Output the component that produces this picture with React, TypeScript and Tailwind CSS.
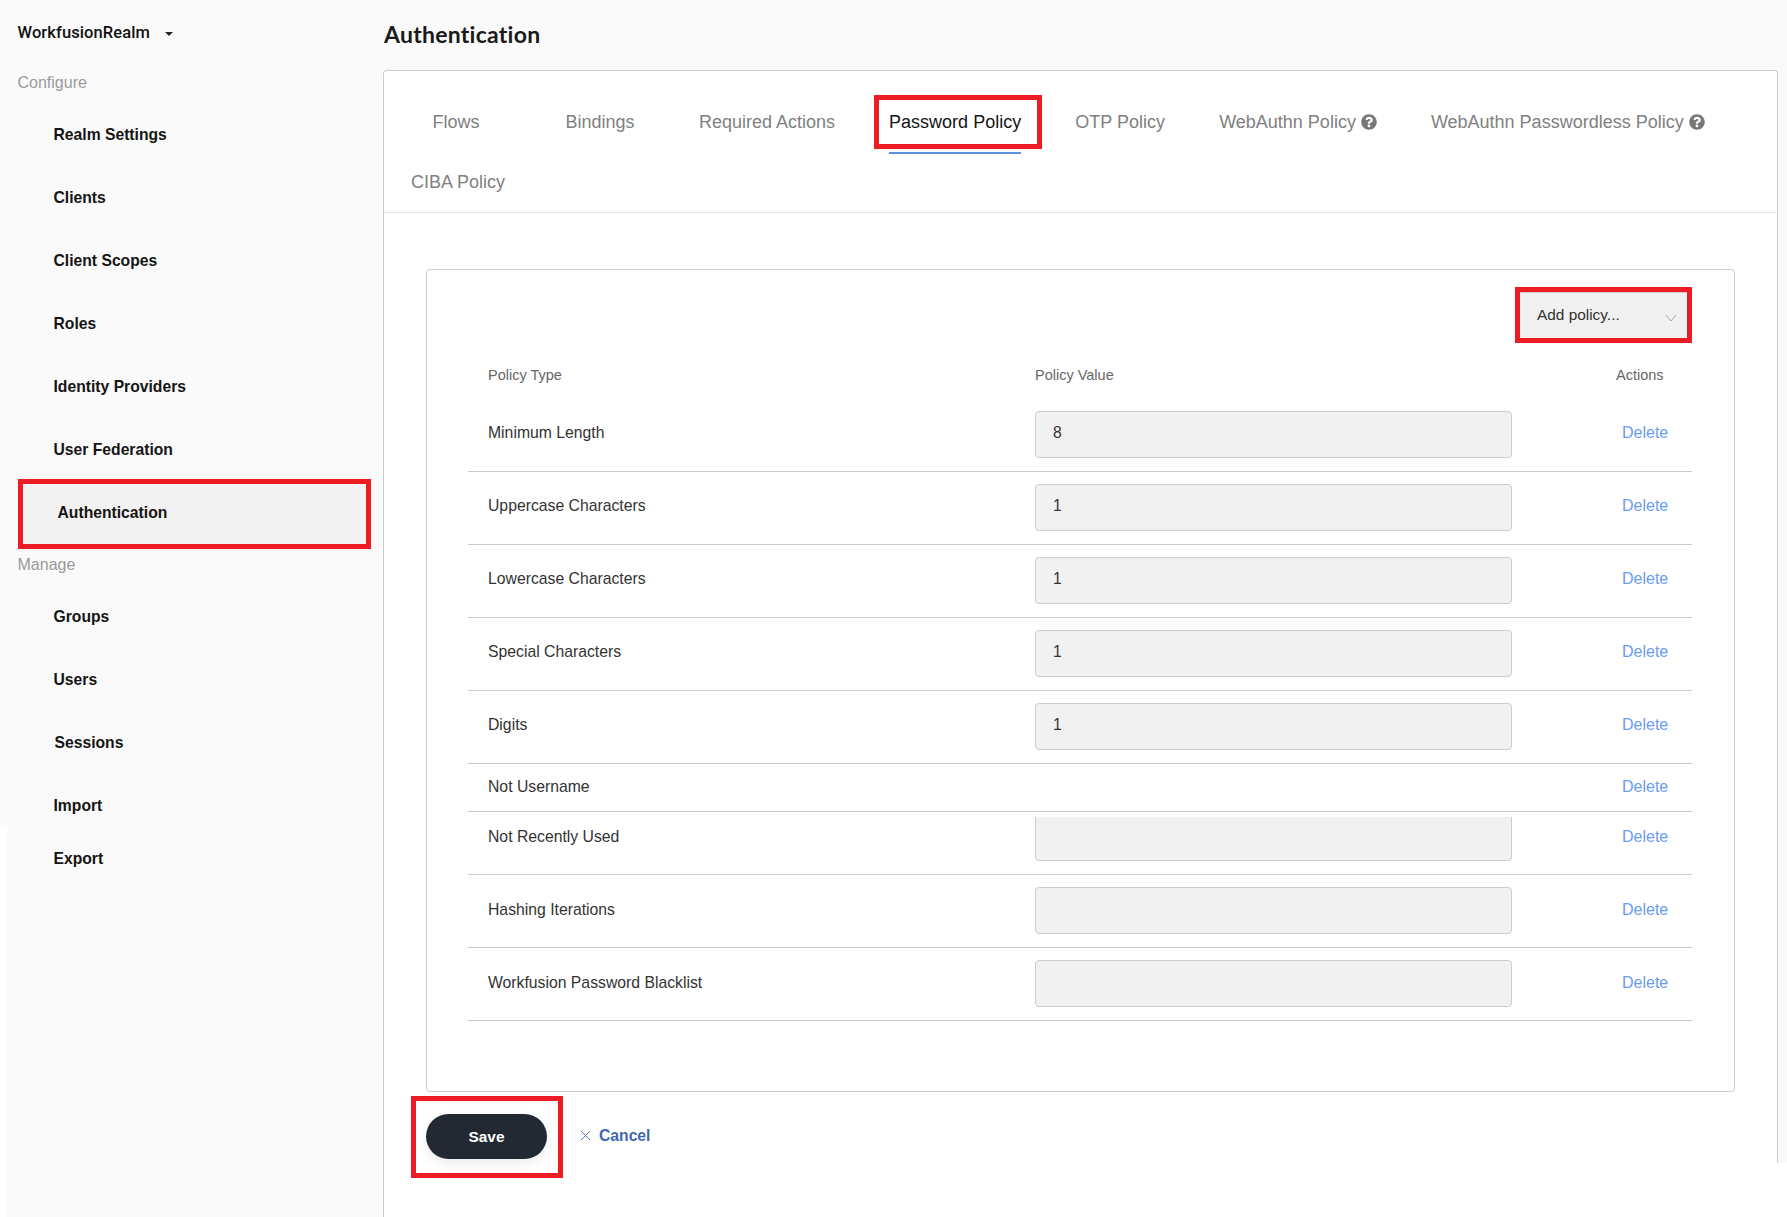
import React from 'react';
import { FaQuestionCircle } from 'react-icons/fa';

const TABS = [
  { label: 'Flows' },
  { label: 'Bindings' },
  { label: 'Required Actions' },
  { label: 'Password Policy', active: true },
  { label: 'OTP Policy' },
  { label: 'WebAuthn Policy', help: true },
  { label: 'WebAuthn Passwordless Policy', help: true },
  { label: 'CIBA Policy' },
];

const POLICIES = [
  { name: 'Minimum Length', value: '8' },
  { name: 'Uppercase Characters', value: '1' },
  { name: 'Lowercase Characters', value: '1' },
  { name: 'Special Characters', value: '1' },
  { name: 'Digits', value: '1' },
  { name: 'Not Username', noInput: true },
  { name: 'Not Recently Used', value: '', clipped: true },
  { name: 'Hashing Iterations', value: '', low: true },
  { name: 'Workfusion Password Blacklist', value: '', low: true },
];

const NavItem = ({ label }: { label: string }) => (
  <div className="h-[63px] pl-[53.5px] flex items-center text-[15.7px] font-bold text-[#151515]">{label}</div>
);

const Sidebar = () => (
  <aside className="w-[383px] shrink-0 flex flex-col bg-white">
    {/* upper part */}
    <div className="h-[827px] bg-[#fafafa] flex flex-col">
      <div className="h-[66px] pl-[17.5px] flex items-center text-[16.5px] font-medium text-[#111] font-['Roboto',sans-serif] tracking-[0.1px]">
        WorkfusionRealm
        <span className="ml-[15px] mt-[2px] w-0 h-0 border-x-[4px] border-x-transparent border-t-[4px] border-t-[#222]" />
      </div>
      <div className="h-[34px] pl-[17.5px] flex items-center text-[16px] text-[#9a9a9a]">Configure</div>
      <div className="mt-[3px]">
        {['Realm Settings', 'Clients', 'Client Scopes', 'Roles', 'Identity Providers', 'User Federation'].map((l) => (
          <NavItem key={l} label={l} />
        ))}
      </div>
      <div className="-mt-[2px] ml-[18px] w-[353px] h-[70px] border-[5px] border-[#ed1c24] bg-[#f2f2f2] pl-[34.5px] pb-[3px] flex items-center text-[15.7px] font-bold text-[#151515]">
        Authentication
      </div>
      <div className="h-[32px] pl-[17.5px] flex items-center text-[16px] text-[#9a9a9a]">Manage</div>
      <div className="mt-[4px]">
        <NavItem label="Groups" />
        <NavItem label="Users" />
        <div className="h-[63px] pl-[54.5px] flex items-center text-[15.7px] font-bold text-[#151515]">Sessions</div>
        <div className="h-[53px] pt-[11px] pl-[53.5px] flex items-center text-[15.7px] font-bold text-[#151515]">Import</div>
      </div>
    </div>
    {/* lower part */}
    <div className="flex-1 ml-[7px] bg-[#fafafa]">
      <div className="h-[64px] pl-[46.5px] flex items-center text-[15.7px] font-bold text-[#151515]">Export</div>
    </div>
  </aside>
);

const Tabs = () => (
  <div className="flex flex-wrap pt-[21px] h-[142px] border-b border-[#e6e6e6] content-start">
    {TABS.map((t) => (
      <div
        key={t.label}
        className={`relative min-w-[144px] px-[27px] h-[60px] flex items-center justify-center text-[18px] ${
          t.active ? 'text-[#151515]' : 'text-[#808080]'
        }`}
      >
        {t.label}
        {t.help && <FaQuestionCircle className="ml-[5px] w-[16px] h-[16px] text-[#777]" />}
        {t.active && (
          <>
            <div className="absolute left-[12px] top-[3px] w-[168px] h-[54px] border-[5px] border-[#ed1c24]" />
            <div className="absolute left-[27px] right-[27px] top-[60px] h-[2px] bg-[#5b92e0]" />
          </>
        )}
      </div>
    ))}
  </div>
);

const PolicyRow = ({ p }: { p: (typeof POLICIES)[number] }) => {
  const rowHeight = p.noInput ? 'h-[48px]' : p.clipped ? 'h-[63px]' : 'h-[73px]';
  // label and action share the same vertical offset inside the row
  const cell = p.noInput ? 'h-[45px]' : p.clipped ? 'h-[49px]' : p.low ? 'h-[70px]' : 'h-[68px]';
  return (
    <div className={`grid grid-cols-[567px_477px_1fr] border-b border-[#ccc] text-[#333] ${rowHeight}`}>
      <div className={`pl-[20px] flex items-center text-[15.75px] ${cell}`}>{p.name}</div>
      {p.noInput ? (
        <div />
      ) : (
        <div
          className={`bg-[#f1f1f1] border-[#ccc] border-x border-b rounded-b-[4px] pl-[17px] flex items-center pb-[4px] text-[15.7px] ${
            p.clipped ? 'mt-[5px] h-[44px]' : 'mt-[12px] h-[47px] border-t rounded-t-[4px]'
          }`}
        >
          {p.value}
        </div>
      )}
      <div className={`pl-[110px] flex items-center text-[16px] text-[#6b9cf0] ${cell}`}>Delete</div>
    </div>
  );
};

const PolicyPanel = () => (
  <div className="ml-[42px] mr-[42px] mt-[56px] h-[823px] border border-[#ccc] rounded-[4px] pt-[21px]">
    <div className="flex justify-end pr-[46px]">
      <div className="relative w-[169px] h-[48px] bg-[#f1f1f1] border-t-2 border-[#ccc] pl-[18px] pr-[11px] pb-[2px] flex items-center justify-between text-[15.4px] text-[#333]">
        Add policy...
        <svg width="12" height="8" viewBox="0 0 12 8" fill="none" stroke="#aaa" strokeWidth="1" className="mt-[5px]">
          <path d="M1 1l5 6 5-6" />
        </svg>
        <div className="absolute -left-[4px] -top-[6px] w-[177px] h-[56px] border-[5px] border-[#ed1c24]" />
      </div>
    </div>
    <div className="mt-[12px] ml-[41px] mr-[42px]">
      <div className="grid grid-cols-[567px_477px_1fr] h-[48px] pt-[2px] items-center text-[14.5px] text-[#666]">
        <div className="pl-[20px]">Policy Type</div>
        <div>Policy Value</div>
        <div className="pl-[104px]">Actions</div>
      </div>
      {POLICIES.map((p) => (
        <PolicyRow key={p.name} p={p} />
      ))}
    </div>
  </div>
);

const Footer = () => (
  <div className="ml-[42px] mt-[22px] flex items-center">
    <div className="relative">
      <button className="w-[121px] h-[45px] rounded-full bg-[#222933] text-white text-[15.4px] font-bold shadow-[0_4px_12px_rgba(0,0,0,0.08)]">
        Save
      </button>
      <div className="absolute -left-[15px] -top-[18px] w-[152px] h-[82px] border-[5px] border-[#ed1c24]" />
    </div>
    <div className="ml-[33px] pb-[2px] flex items-center text-[15.7px] font-bold text-[#3f67b0]">
      <svg width="11" height="11" viewBox="0 0 11 11" stroke="#5a7fc0" strokeWidth="1" className="mr-[8px]">
        <path d="M1 1l9 9M10 1l-9 9" />
      </svg>
      Cancel
    </div>
  </div>
);

export default function App() {
  return (
    <div className="w-full h-[1217px] overflow-hidden flex bg-white font-['Liberation_Sans',Arial,sans-serif]">
      <Sidebar />
      <main className="flex-1 flex flex-col min-w-0">
        <div className="h-[70px] bg-[#fafafa] flex items-center pl-px pb-[2px]">
          <h1 className="text-[23px] tracking-[0.25px] font-bold text-[#1a1a1a] font-['Lato',sans-serif]">Authentication</h1>
        </div>
        <div className="flex h-[1093px] bg-[#fafafa]">
          <section className="flex-1 min-w-0 bg-white border border-b-0 border-[#ccc] rounded-t-[4px]">
            <Tabs />
            <PolicyPanel />
            <Footer />
          </section>
          <div className="w-[9px] shrink-0" />
        </div>
        <div className="flex-1 border-l border-[#ccc]" />
      </main>
    </div>
  );
}
